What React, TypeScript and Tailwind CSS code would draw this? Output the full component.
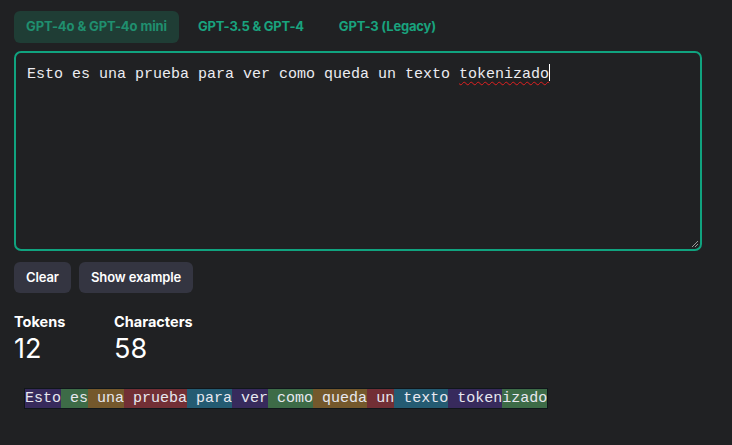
import React from 'react';

type tokenType = {
  text: string;
  color: string;
};

const tokens: tokenType[] = [
  { text: 'Esto', color: 'bg-[#372a5c]' },
  { text: ' es', color: 'bg-[#3d6b47]' },
  { text: ' una', color: 'bg-[#74582c]' },
  { text: ' prueba', color: 'bg-[#722f35]' },
  { text: ' para', color: 'bg-[#245b72]' },
  { text: ' ver', color: 'bg-[#372a5c]' },
  { text: ' como', color: 'bg-[#3d6b47]' },
  { text: ' queda', color: 'bg-[#74582c]' },
  { text: ' un', color: 'bg-[#722f35]' },
  { text: ' texto', color: 'bg-[#245b72]' },
  { text: ' token', color: 'bg-[#372a5c]' },
  { text: 'izado', color: 'bg-[#3d6b47]' },
];

const tabs = ['GPT-4o & GPT-4o mini', 'GPT-3.5 & GPT-4', 'GPT-3 (Legacy)'];

const mono = { fontFamily: '"Liberation Mono", "DejaVu Sans Mono", monospace' };
const sans = { fontFamily: 'Inter, "Noto Sans", sans-serif' };

const App = () => {
  return (
    <div className="w-[732px] h-[445px] bg-[#202123] text-white overflow-hidden" style={sans}>
      <div className="px-[14px] pt-[11px]">
        {/* model tabs */}
        <div className="flex items-center gap-[3px]">
          {tabs.map((tab, i) => (
            <div
              key={tab}
              className={
                i === 0
                  ? 'h-[32px] px-[12px] flex items-center rounded-md bg-[#1f3d35] text-[#1f8f6f] text-[13px] font-bold tracking-[-0.1px]'
                  : 'h-[32px] px-[16px] flex items-center rounded-md text-[#19a37e] text-[13px] font-bold tracking-[-0.2px]'
              }
            >
              {tab}
            </div>
          ))}
        </div>

        {/* input box */}
        <div className="relative mt-[8px] w-[688px] h-[200px] rounded-[7px] border-2 border-[#10a37f] px-[11px] pt-[11px]">
          <div className="text-[15px] leading-[20px] text-[#ececf1]" style={mono}>
            Esto es una prueba para ver como queda un texto{' '}
            <span className="underline decoration-wavy decoration-[#e02020] decoration-1 underline-offset-[3px]">
              tokenizado
            </span>
            <span className="inline-block w-px h-[17px] bg-white align-[-3px]" />
          </div>
          <svg
            className="absolute right-[1px] bottom-[1px]"
            width="10"
            height="10"
            viewBox="0 0 10 10"
          >
            <path d="M9 3 L3 9 M9 6 L6 9" stroke="#9a9a9a" strokeWidth="1" />
          </svg>
        </div>

        {/* actions */}
        <div className="flex gap-[8px] mt-[11px]">
          <button className="h-[31px] px-[12px] rounded-md bg-[#343541] text-[13px] font-semibold tracking-[-0.1px] text-white">
            Clear
          </button>
          <button className="h-[31px] px-[12px] rounded-md bg-[#343541] text-[13px] font-semibold tracking-[-0.1px] text-white">
            Show example
          </button>
        </div>

        {/* stats */}
        <div className="flex mt-[20px]">
          <div className="w-[100px]">
            <div className="text-[14.5px] font-bold leading-[18px]">Tokens</div>
            <div className="text-[27px] leading-[34px] mt-[1px]">12</div>
          </div>
          <div>
            <div className="text-[14.5px] font-bold leading-[18px]">Characters</div>
            <div className="text-[27px] leading-[34px] mt-[1px]">58</div>
          </div>
        </div>

        {/* tokenized output */}
        <div className="mt-[18px] pl-[11px]">
          <div
            className="inline-flex whitespace-pre text-[15px] leading-[19px] text-[#e8e8f0] outline outline-1 outline-[#10161a]"
            style={mono}
          >
            {tokens.map((t, i) => (
              <span key={i} className={t.color}>
                {t.text}
              </span>
            ))}
          </div>
        </div>
      </div>
    </div>
  );
};

export default App;
